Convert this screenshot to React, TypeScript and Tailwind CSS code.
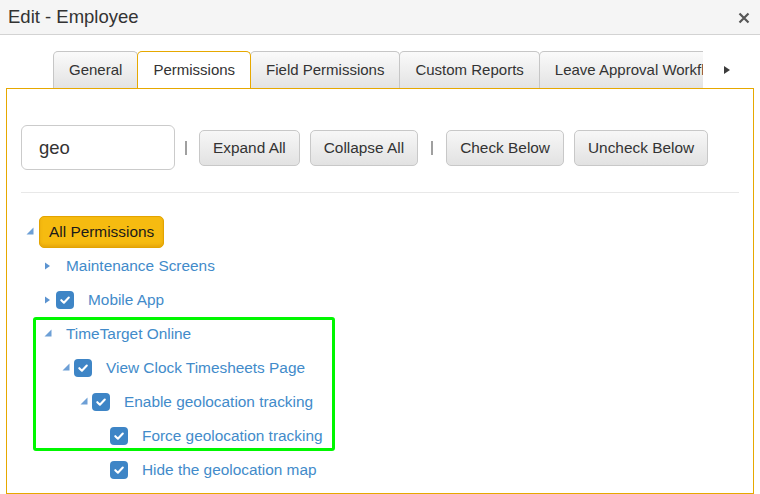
import type { ReactNode } from 'react'

const indent = ['pl-0', 'pl-[18px]', 'pl-[36px]', 'pl-[54px]', 'pl-[72px]']

type Node = {
  label: string
  level: number
  toggle?: 'open' | 'closed'
  checked?: boolean
  selected?: boolean
}

const nodes: Node[] = [
  { label: 'All Permissions', level: 0, toggle: 'open', selected: true },
  { label: 'Maintenance Screens', level: 1, toggle: 'closed' },
  { label: 'Mobile App', level: 1, toggle: 'closed', checked: true },
  { label: 'TimeTarget Online', level: 1, toggle: 'open' },
  { label: 'View Clock Timesheets Page', level: 2, toggle: 'open', checked: true },
  { label: 'Enable geolocation tracking', level: 3, toggle: 'open', checked: true },
  { label: 'Force geolocation tracking', level: 4, checked: true },
  { label: 'Hide the geolocation map', level: 4, checked: true },
]

const tabs = ['General', 'Permissions', 'Field Permissions', 'Custom Reports', 'Leave Approval Workflow']

function Toggle({ state }: { state?: 'open' | 'closed' }) {
  return (
    <span className="w-[17px] h-[18px] shrink-0 flex items-center">
      {state && (
        <svg width="17" height="18" viewBox="0 0 17 18">
          {state === 'open' ? (
            <polygon points="12.5,4.5 12.5,11.5 5.5,11.5" fill="#6d9fd6" />
          ) : (
            <polygon points="6,5.5 11,9 6,12.5" fill="#5b93d0" />
          )}
        </svg>
      )}
    </span>
  )
}

function Checkbox() {
  return (
    <span className="w-[18px] h-[18px] shrink-0 rounded-[4px] bg-[#3e85c6] flex items-center justify-center mr-[4px]">
      <svg width="12" height="12" viewBox="0 0 12 12">
        <path d="M2.3 6.2 L4.9 8.7 L9.8 3.6" fill="none" stroke="#fff" strokeWidth="2.1" strokeLinecap="round" strokeLinejoin="round" />
      </svg>
    </span>
  )
}

function Button({ children }: { children: ReactNode }) {
  return (
    <button className="h-[36px] px-[13px] rounded-[5px] border border-[#c8c8c8] bg-gradient-to-b from-[#f7f7f7] to-[#e2e2e2] text-[15.4px] text-[#333]">
      {children}
    </button>
  )
}

function Sep({ className }: { className: string }) {
  return <span className={`w-[2px] h-[14px] bg-[#a0a0a0] ${className}`} />
}

export default function App() {
  return (
    <div className="w-[760px] h-[494px] overflow-hidden bg-white font-['Liberation_Sans',Arial,sans-serif] flex flex-col">
      <header className="h-[35px] shrink-0 bg-[#f5f5f5] border-b border-[#d3d3d3] flex items-center justify-between pl-[8px] pr-[10px]">
        <span className="text-[18.5px] text-[#333]">Edit - Employee</span>
        <svg width="12" height="12" viewBox="0 0 12 12" className="mt-px">
          <path d="M1.5 1.5 L10.5 10.5 M10.5 1.5 L1.5 10.5" stroke="#575757" strokeWidth="2.2" />
        </svg>
      </header>

      <div className="px-[6px] pt-[16px] flex flex-col flex-1 min-h-0">
        <div className="flex items-center pl-[47px]">
          <div className="w-[650px] overflow-hidden flex">
            {tabs.map((t, i) => (
              <div
                key={t}
                className={
                  i === 1
                    ? 'relative z-10 -ml-px h-[37px] px-[15px] flex items-center shrink-0 whitespace-nowrap rounded-t-[5px] border border-b-0 border-[#e6a800] bg-white text-[15px] text-[#333]'
                    : `${i === 0 ? '' : '-ml-px'} h-[37px] px-[15px] flex items-center shrink-0 whitespace-nowrap rounded-t-[5px] border border-b-0 border-[#c6c6c6] bg-gradient-to-b from-[#fafafa] to-[#e3e3e3] text-[15px] text-[#333]`
                }
              >
                {t}
              </div>
            ))}
          </div>
          <svg width="8" height="10" viewBox="0 0 8 10" className="ml-[20px]">
            <polygon points="1,1 7,5 1,9" fill="#3c3c3c" />
          </svg>
        </div>

        <div className="flex-1 border border-[#e6a800] px-[14px] pt-[36px]">
          <div className="flex items-center">
            <div className="w-[154px] h-[45px] rounded-[6px] border border-[#cbcbcb] flex items-center pl-[17px] text-[18.5px] text-[#333]">
              geo
            </div>
            <Sep className="ml-[10px] mr-[12px]" />
            <div className="flex gap-[10px]">
              <Button>Expand All</Button>
              <Button>Collapse All</Button>
            </div>
            <Sep className="ml-[13px] mr-[13px]" />
            <div className="flex gap-[10px]">
              <Button>Check Below</Button>
              <Button>Uncheck Below</Button>
            </div>
          </div>

          <div className="mt-[22px] border-t border-[#e8e8e8]" />

          <div className="relative pt-[22px]">
            {nodes.map((n) => (
              <div key={n.label} className={`h-[34px] flex items-center ${indent[n.level]}`}>
                <Toggle state={n.toggle} />
                {n.checked && <Checkbox />}
                {n.selected ? (
                  <span className="ml-px h-[32px] px-[9px] flex items-center rounded-[5px] border border-[#e3a400] bg-[#f6bb10] text-[15.4px] text-[#1a1a1a] shadow-[inset_0_-2px_3px_rgba(200,130,0,0.35)]">
                    {n.label}
                  </span>
                ) : (
                  <span className="px-[10px] text-[15.4px] text-[#428bca] whitespace-nowrap">{n.label}</span>
                )}
              </div>
            ))}
            <div className="absolute left-[12px] top-[124px] w-[302px] h-[134px] border-[3px] border-[#00f700] rounded-[3px] pointer-events-none" />
          </div>
        </div>
      </div>
    </div>
  )
}
